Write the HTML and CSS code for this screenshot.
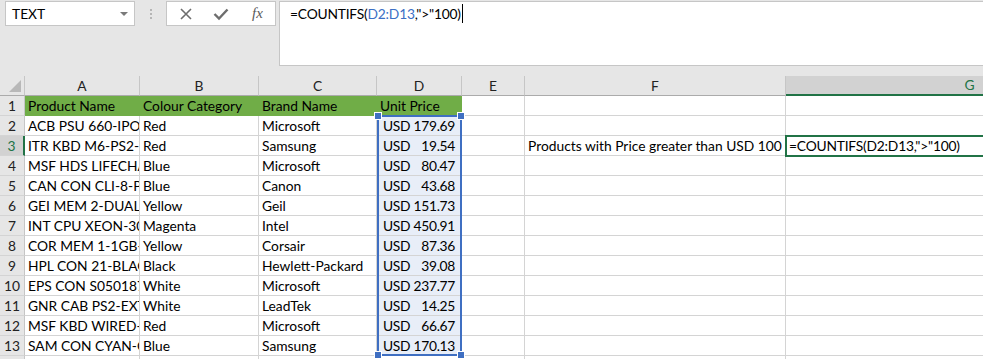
FILE: index.html
```html
<!DOCTYPE html>
<html>
  <head>
    <meta charset="UTF-8">
    <title>COUNTIFS</title>
    <link rel="stylesheet" href="styles.css">
  </head>
  <body>
    <div class="toolbar">
      <div class="namebox">
        <span>TEXT</span>
        <span class="arrow"></span>
      </div>
      <div class="grip"><i></i><i></i><i></i></div>
      <div class="buttons">
        <svg class="btn" width="14" height="14" viewBox="0 0 14 14"><path d="M2 2 L12 12 M12 2 L2 12" stroke="#6d6d6d" stroke-width="1.6" fill="none"/></svg>
        <svg class="btn" width="16" height="14" viewBox="0 0 16 14"><path d="M1.5 7 L6 11.5 L14.5 2.5" stroke="#6d6d6d" stroke-width="2.4" fill="none"/></svg>
        <span class="fx">fx</span>
      </div>
      <div class="formula">=COUNTIFS(<span class="ref">D2:D13</span>,"&gt;"100)<span class="caret"></span></div>
    </div>

    <div class="sheet">
      <div class="corner"></div>
      <div class="colhead">A</div>
      <div class="colhead">B</div>
      <div class="colhead">C</div>
      <div class="colhead">D</div>
      <div class="colhead">E</div>
      <div class="colhead">F</div>
      <div class="colhead active">G</div>

      <div class="rowhead">1</div>
      <div class="cell green">Product Name</div>
      <div class="cell green">Colour Category</div>
      <div class="cell green">Brand Name</div>
      <div class="cell green">Unit Price</div>
      <div class="cell"></div>
      <div class="cell"></div>
      <div class="cell"></div>

      <div class="rowhead">2</div>
      <div class="cell">ACB PSU 660-IPOWER</div>
      <div class="cell">Red</div>
      <div class="cell">Microsoft</div>
      <div class="cell price"><span>USD</span><span>179.69</span></div>
      <div class="cell"></div>
      <div class="cell"></div>
      <div class="cell"></div>

      <div class="rowhead current">3</div>
      <div class="cell">ITR KBD M6-PS2-WHITE</div>
      <div class="cell">Red</div>
      <div class="cell">Samsung</div>
      <div class="cell price"><span>USD</span><span>19.54</span></div>
      <div class="cell"></div>
      <div class="cell label">Products with Price greater than USD 100</div>
      <div class="cell editing">=COUNTIFS(D2:D13,"&gt;"100)</div>

      <div class="rowhead">4</div>
      <div class="cell">MSF HDS LIFECHAT LX</div>
      <div class="cell">Blue</div>
      <div class="cell">Microsoft</div>
      <div class="cell price"><span>USD</span><span>80.47</span></div>
      <div class="cell"></div>
      <div class="cell"></div>
      <div class="cell"></div>

      <div class="rowhead">5</div>
      <div class="cell">CAN CON CLI-8-Photo</div>
      <div class="cell">Blue</div>
      <div class="cell">Canon</div>
      <div class="cell price"><span>USD</span><span>43.68</span></div>
      <div class="cell"></div>
      <div class="cell"></div>
      <div class="cell"></div>

      <div class="rowhead">6</div>
      <div class="cell">GEI MEM 2-DUAL-2GB</div>
      <div class="cell">Yellow</div>
      <div class="cell">Geil</div>
      <div class="cell price"><span>USD</span><span>151.73</span></div>
      <div class="cell"></div>
      <div class="cell"></div>
      <div class="cell"></div>

      <div class="rowhead">7</div>
      <div class="cell">INT CPU XEON-3040</div>
      <div class="cell">Magenta</div>
      <div class="cell">Intel</div>
      <div class="cell price"><span>USD</span><span>450.91</span></div>
      <div class="cell"></div>
      <div class="cell"></div>
      <div class="cell"></div>

      <div class="rowhead">8</div>
      <div class="cell">COR MEM 1-1GB-VS</div>
      <div class="cell">Yellow</div>
      <div class="cell">Corsair</div>
      <div class="cell price"><span>USD</span><span>87.36</span></div>
      <div class="cell"></div>
      <div class="cell"></div>
      <div class="cell"></div>

      <div class="rowhead">9</div>
      <div class="cell">HPL CON 21-BLACK</div>
      <div class="cell">Black</div>
      <div class="cell">Hewlett-Packard</div>
      <div class="cell price"><span>USD</span><span>39.08</span></div>
      <div class="cell"></div>
      <div class="cell"></div>
      <div class="cell"></div>

      <div class="rowhead">10</div>
      <div class="cell">EPS CON S050187</div>
      <div class="cell">White</div>
      <div class="cell">Microsoft</div>
      <div class="cell price"><span>USD</span><span>237.77</span></div>
      <div class="cell"></div>
      <div class="cell"></div>
      <div class="cell"></div>

      <div class="rowhead">11</div>
      <div class="cell">GNR CAB PS2-EXT-</div>
      <div class="cell">White</div>
      <div class="cell">LeadTek</div>
      <div class="cell price"><span>USD</span><span>14.25</span></div>
      <div class="cell"></div>
      <div class="cell"></div>
      <div class="cell"></div>

      <div class="rowhead">12</div>
      <div class="cell">MSF KBD WIRED-DESK</div>
      <div class="cell">Red</div>
      <div class="cell">Microsoft</div>
      <div class="cell price"><span>USD</span><span>66.67</span></div>
      <div class="cell"></div>
      <div class="cell"></div>
      <div class="cell"></div>

      <div class="rowhead">13</div>
      <div class="cell">SAM CON CYAN-CLP</div>
      <div class="cell">Blue</div>
      <div class="cell">Samsung</div>
      <div class="cell price"><span>USD</span><span>170.13</span></div>
      <div class="cell"></div>
      <div class="cell"></div>
      <div class="cell"></div>

      <div class="rowhead"></div>
      <div class="cell"></div>
      <div class="cell"></div>
      <div class="cell"></div>
      <div class="cell"></div>
      <div class="cell"></div>
      <div class="cell"></div>
      <div class="cell"></div>

      <!-- range being referenced by the formula -->
      <div class="range">
        <i class="h tl"></i><i class="h tr"></i><i class="h bl"></i><i class="h br"></i>
      </div>
      <div class="active-cell"></div>
    </div>
  </body>
</html>
```

FILE: styles.css
```css
body {
  margin: 0;
  background-color: #e6e6e6;
  font-family: Lato, "Open Sans", sans-serif;
  font-size: 13.8px;
  color: #000;
  overflow: hidden;
  width: 983px;
  height: 359px;
}

.toolbar {
  display: flex;
  align-items: flex-start;
  height: 76px;
  padding-top: 1px;
  box-sizing: border-box;
}

.namebox {
  margin-left: 5px;
  width: 130px;
  height: 25px;
  background-color: #fff;
  border: 1px solid #c6c6c6;
  box-sizing: border-box;
  display: flex;
  align-items: center;
  justify-content: space-between;
  padding: 0 6px 0 6px;
}

.namebox .arrow {
  width: 0;
  height: 0;
  border-left: 4px solid transparent;
  border-right: 4px solid transparent;
  border-top: 4px solid #7a7a7a;
}

.grip {
  width: 31px;
  height: 25px;
  display: flex;
  flex-direction: column;
  align-items: center;
  justify-content: center;
  gap: 2px;
}

.grip i {
  display: block;
  width: 2px;
  height: 2px;
  background-color: #b5b5b5;
}

.buttons {
  width: 110px;
  height: 25px;
  background-color: #fff;
  border: 1px solid #c6c6c6;
  box-sizing: border-box;
  display: flex;
  align-items: center;
  padding-left: 12px;
  gap: 20px;
}

.fx {
  font-family: "Liberation Serif", serif;
  font-style: italic;
  font-size: 15px;
  color: #5a5a5a;
  margin-left: 3px;
}

.formula {
  margin-left: 3px;
  flex: 1;
  height: 65px;
  background-color: #fff;
  border: 1px solid #c6c6c6;
  border-right: none;
  box-sizing: border-box;
  padding: 2px 0 0 10px;
  line-height: 20px;
  letter-spacing: -0.2px;
}

.formula .ref {
  color: #3c6fc5;
}

.caret {
  display: inline-block;
  width: 1px;
  height: 19px;
  background-color: #000;
  vertical-align: -4px;
  margin-left: 1px;
}

.sheet {
  position: relative;
  display: grid;
  grid-template-columns: 25px 115px 119px 118px 85px 63px 261px 368px;
  grid-auto-rows: 20px;
  background-color: #fff;
}

.corner {
  background-color: #e6e6e6;
  border-right: 1px solid #c6c6c6;
  border-bottom: 1px solid #ababab;
  position: relative;
}

.corner::after {
  content: "";
  position: absolute;
  right: 3px;
  bottom: 3px;
  border-left: 12px solid transparent;
  border-bottom: 12px solid #b8b8b8;
}

.colhead {
  background-color: #e6e6e6;
  border-right: 1px solid #c6c6c6;
  border-bottom: 1px solid #ababab;
  text-align: center;
  line-height: 19px;
  color: #222;
}

.colhead.active {
  background-color: #d2d2d2;
  border-bottom: 2px solid #217346;
  color: #217346;
  line-height: 18px;
}

.rowhead {
  background-color: #e6e6e6;
  border-right: 1px solid #c6c6c6;
  border-bottom: 1px solid #d4d4d4;
  text-align: center;
  line-height: 19px;
  color: #222;
}

.rowhead.current {
  background-color: #d2d2d2;
  border-right: 2px solid #217346;
  color: #217346;
}

.cell {
  border-right: 1px solid #d4d4d4;
  border-bottom: 1px solid #d4d4d4;
  padding: 0 2px 0 3px;
  line-height: 19px;
  white-space: nowrap;
  overflow: hidden;
}

.cell.green {
  background-color: #70ad47;
  border-color: #70ad47;
}

.cell.label {
  overflow: visible;
}

.cell.editing {
  overflow: visible;
  letter-spacing: -0.2px;
}

.price {
  background-color: #e8eef8;
  display: flex;
  justify-content: space-between;
  padding: 0 6px 0 6px;
  letter-spacing: -0.3px;
}

.range {
  position: absolute;
  left: 377px;
  top: 39px;
  width: 85px;
  height: 241px;
  border: 2px solid #3f6fc2;
  box-sizing: border-box;
}

.range .h {
  position: absolute;
  width: 6px;
  height: 6px;
  background-color: #3f6fc2;
  border: 1px solid #fff;
}

.range .tl { left: -5px; top: -5px; }
.range .tr { right: -5px; top: -5px; }
.range .bl { left: -5px; bottom: -5px; }
.range .br { right: -5px; bottom: -5px; }

.active-cell {
  position: absolute;
  left: 785px;
  top: 59px;
  width: 210px;
  height: 22px;
  border: 2px solid #217346;
  box-sizing: border-box;
}
```
